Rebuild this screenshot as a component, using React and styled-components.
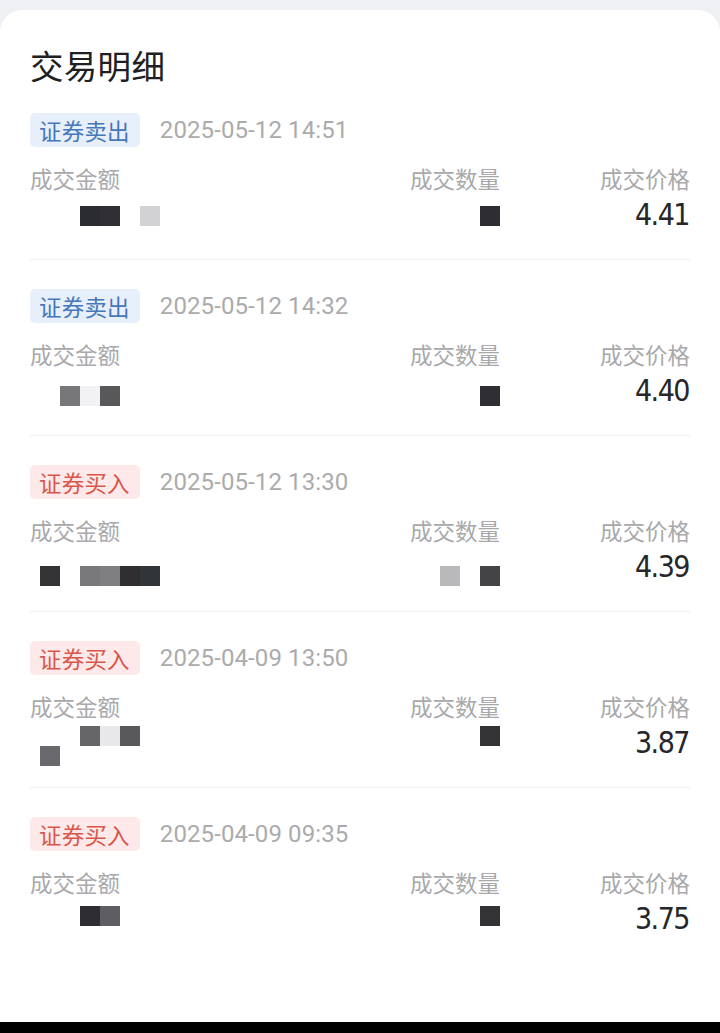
import React from "react";
import styled, { createGlobalStyle } from "styled-components";

const GlobalStyle = createGlobalStyle`
  html, body { margin: 0; padding: 0; }
  body {
    background: #eef0f3;
    font-family: "Noto Sans CJK SC", "Noto Sans", sans-serif;
  }
`;

const Page = styled.div`
  min-height: 100vh;
  display: flex;
  flex-direction: column;
  background: #eef0f3;
`;

const TopGap = styled.div`
  height: 10px;
  flex: none;
`;

const Card = styled.main`
  flex: 1;
  background: #ffffff;
  border-radius: 22px 22px 0 0;
  padding: 36px 30px 0;
`;

const BottomBar = styled.div`
  height: 11px;
  flex: none;
  background: #000;
`;

const Title = styled.h1`
  margin: 0;
  font-size: 33.5px;
  line-height: 38px;
  font-weight: 400;
  color: #202023;
  letter-spacing: 0.3px;
`;

const Record = styled.section`
  padding: 29px 0 27px;
  border-bottom: 1px solid ${(p) => (p.$last ? "transparent" : "#f1f1f3")};
`;

const Head = styled.div`
  display: flex;
  align-items: center;
  height: 34px;
`;

const Tag = styled.span`
  display: inline-flex;
  align-items: center;
  height: 34px;
  padding: 0 10px 0 9px;
  border-radius: 5px;
  font-size: 22.5px;
  letter-spacing: 0.2px;
  background: ${(p) => (p.$buy ? "#fde9e9" : "#e7effa")};
  color: ${(p) => (p.$buy ? "#d8574c" : "#4577b9")};
`;

const DateText = styled.span`
  margin-left: 20px;
  font-family: Roboto, "Noto Sans", sans-serif;
  font-size: 24px;
  color: #ababae;
  letter-spacing: 0.1px;
`;

const Grid = styled.div`
  display: grid;
  grid-template-columns: 1fr 120px 190px;
  grid-template-rows: 30px 34px;
  row-gap: 5px;
  margin-top: 16px;
`;

const Label = styled.div`
  font-size: 22.5px;
  line-height: 30px;
  color: #a9a9ac;
  text-align: ${(p) => (p.$right ? "right" : "left")};
`;

const Value = styled.div`
  height: 34px;
  display: flex;
  justify-content: ${(p) => (p.$right ? "flex-end" : "flex-start")};
  padding-left: ${(p) => (p.$right ? "0" : "10px")};
`;

const Price = styled.div`
  font-family: "DejaVu Sans Condensed", "DejaVu Sans", sans-serif;
  font-stretch: condensed;
  font-size: 30px;
  line-height: 34px;
  font-weight: 500;
  color: #26262b;
  text-align: right;
  letter-spacing: -1.5px;
  padding-right: 1px;
`;

const Mosaic = styled.div`
  display: flex;
  flex-direction: column;
  flex: none;
  align-self: flex-start;
`;

const MosaicRow = styled.div`
  display: flex;
  flex: none;
`;

const Cell = styled.span`
  flex: none;
  width: 20px;
  height: 20px;
  background: ${(p) => p.$c || "transparent"};
`;

const MosaicBlock = ({ rows, offset }) => (
  <Mosaic style={{ marginTop: offset }}>
    {rows.map((r, i) => (
      <MosaicRow key={i}>
        {r.map((c, j) => (
          <Cell key={j} $c={c} />
        ))}
      </MosaicRow>
    ))}
  </Mosaic>
);

const records = [
  {
    buy: false,
    date: "2025-05-12 14:51",
    price: "4.41",
    offset: 8,
    amount: [[null, null, "#2b2c30", "#303034", null, "#d2d2d4"]],
    qty: [["#2e2d32"]],
  },
  {
    buy: false,
    date: "2025-05-12 14:32",
    price: "4.40",
    offset: 12,
    amount: [[null, "#777779", "#f2f2f5", "#58585a"]],
    qty: [["#2f2f33"]],
  },
  {
    buy: true,
    date: "2025-05-12 13:30",
    price: "4.39",
    offset: 16,
    amount: [["#333335", null, "#79797b", "#7f7f81", "#2f2f32", "#323538"]],
    qty: [["#b9b9bb", null, "#444446"]],
  },
  {
    buy: true,
    date: "2025-04-09 13:50",
    price: "3.87",
    offset: 0,
    amount: [
      [null, null, "#666668", "#e8e8ea", "#59595b"],
      ["#69696d"],
    ],
    qty: [["#333336"]],
  },
  {
    buy: true,
    date: "2025-04-09 09:35",
    price: "3.75",
    offset: 4,
    amount: [[null, null, "#2e2e32", "#5e5d61"]],
    qty: [["#333336"]],
  },
];

export default function App() {
  return (
    <Page>
      <GlobalStyle />
      <TopGap />
      <Card>
        <Title>交易明细</Title>
        {records.map((r, i) => (
          <Record key={i} $last={i === records.length - 1}>
            <Head>
              <Tag $buy={r.buy}>{r.buy ? "证券买入" : "证券卖出"}</Tag>
              <DateText>{r.date}</DateText>
            </Head>
            <Grid>
              <Label>成交金额</Label>
              <Label $right>成交数量</Label>
              <Label $right>成交价格</Label>
              <Value>
                <MosaicBlock rows={r.amount} offset={r.offset} />
              </Value>
              <Value $right>
                <MosaicBlock rows={r.qty} offset={r.offset} />
              </Value>
              <Price>{r.price}</Price>
            </Grid>
          </Record>
        ))}
      </Card>
      <BottomBar />
    </Page>
  );
}
